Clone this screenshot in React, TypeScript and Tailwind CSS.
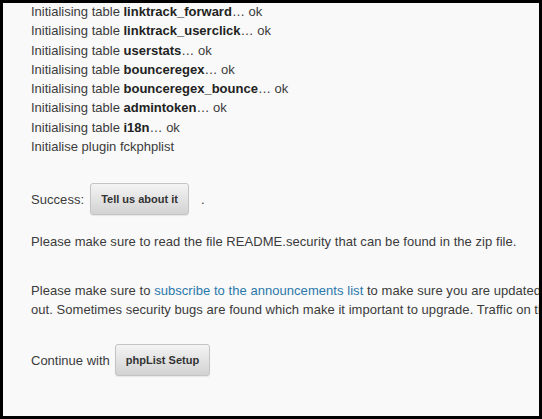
import React from "react";

const tables = [
  "linktrack_forward",
  "linktrack_userclick",
  "userstats",
  "bounceregex",
  "bounceregex_bounce",
  "admintoken",
  "i18n",
];

function Btn({ children }: { children: React.ReactNode }) {
  return (
    <button className="h-[32px] px-[10px] rounded-[3px] border border-[#c4c4c4] bg-gradient-to-b from-[#f4f4f4] to-[#d2d2d2] text-[11px] font-bold text-[#333] shadow-[0_1px_1px_rgba(0,0,0,0.08)] leading-none">
      {children}
    </button>
  );
}

export default function App() {
  return (
    <div
      className="w-[542px] h-[419px] bg-black p-[3px]"
      style={{ fontFamily: '"Liberation Sans", Arial, sans-serif' }}
    >
      <div className="w-full h-full bg-[#f9f9f9] overflow-hidden pl-[28px] text-[13px] text-[#3b3b3b] leading-[19.3px]">
        <div className="-mt-[1px]">
          {tables.map((t) => (
            <div key={t} className="whitespace-nowrap">
              Initialising table <b className="text-[#222]">{t}</b>… ok
            </div>
          ))}
          <div>Initialise plugin fckphplist</div>
        </div>

        <div className="flex items-center mt-[27px] whitespace-nowrap">
          <span className="tracking-[0.05px]">Success:</span>
          <span className="ml-[6px]">
            <Btn>Tell us about it</Btn>
          </span>
          <span className="ml-[12px]">.</span>
        </div>

        <p className="mt-[17px] whitespace-nowrap tracking-[0.05px]">
          Please make sure to read the file README.security that can be found in the zip file.
        </p>

        <p className="mt-[29px] whitespace-nowrap tracking-[0.05px]">
          Please make sure to{" "}
          <a className="text-[#2b78ab]">subscribe to the announcements list</a> to make sure you
          are updated when a new version comes
          <br />
          out. Sometimes security bugs are found which make it important to upgrade. Traffic on the
          list is very low.
        </p>

        <div className="flex items-center mt-[25px] whitespace-nowrap">
          <span>Continue with</span>
          <span className="ml-[5px]">
            <Btn>phpList Setup</Btn>
          </span>
        </div>
      </div>
    </div>
  );
}
